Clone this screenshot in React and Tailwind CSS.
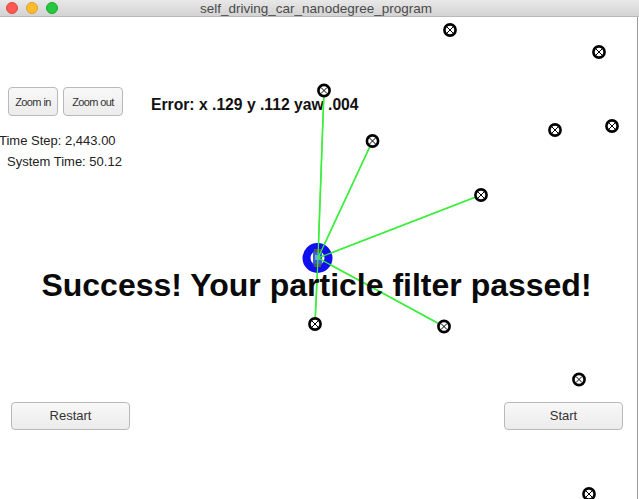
import React from "react";

const landmarks = [
  [450, 30], [599, 52], [324, 90.5], [555, 130], [612, 126], [372.5, 141],
  [481, 195], [315, 324], [444, 326.5], [579, 379.5], [589, 494],
];
const observed = [[324, 90.5], [372.5, 141], [481, 195], [444, 326.5], [315, 324]];
const car = [318, 258];

function Btn({ children, className }) {
  return (
    <div
      className={
        "flex items-center justify-center rounded-[4px] border border-[#b9b9b9] bg-gradient-to-b from-[#f8f8f8] to-[#ececec] text-[#333] " +
        className
      }
    >
      {children}
    </div>
  );
}

export default function App() {
  return (
    <div
      className="relative w-[639px] h-[499px] overflow-hidden bg-white"
      style={{ fontFamily: '"Liberation Sans", Arial, sans-serif' }}
    >
      {/* title bar */}
      <div className="relative flex h-[17px] items-center border-b border-[#b8b8b8] bg-gradient-to-b from-[#e8e8e8] to-[#d3d3d3]">
        <div className="relative z-10 flex gap-[8px] pl-[6px]">
          <div className="h-[12px] w-[12px] rounded-full bg-[#fc5753] border border-[#df4744]" />
          <div className="h-[12px] w-[12px] rounded-full bg-[#fdbc2e] border border-[#de9f34]" />
          <div className="h-[12px] w-[12px] rounded-full bg-[#27c83f] border border-[#1aab29]" />
        </div>
        <div className="absolute inset-0 flex items-center justify-center pr-[7px] pt-[1px] text-[13.5px] leading-none text-[#4a4a4a]">
          self_driving_car_nanodegree_program
        </div>
      </div>

      {/* canvas */}
      <div className="relative h-[482px] border-r border-[#9a9a9a] w-[638px]">
        <div className="flex items-center pl-[8px] pt-[70px]">
          <Btn className="h-[29px] w-[50px] text-[11px] tracking-[-0.6px]">Zoom in</Btn>
          <Btn className="ml-[5px] h-[29px] w-[60px] text-[11px] tracking-[-0.6px]">Zoom out</Btn>
          <div className="ml-[28px] mt-[6px] text-[15.7px] font-bold text-[#111]">
            Error: x .129 y .112 yaw .004
          </div>
        </div>
        <div className="ml-[-1px] mt-[16px] text-[13px] leading-[16px] text-[#222]">Time Step: 2,443.00</div>
        <div className="ml-[7px] mt-[5px] text-[13px] leading-[16px] text-[#222]">System Time: 50.12</div>

        {/* graphics */}
        <svg
          className="absolute left-0 top-[-17px] pointer-events-none"
          width="639"
          height="499"
          viewBox="0 0 639 499"
        >
          {observed.map(([x, y], i) => (
            <line key={i} x1={car[0]} y1={car[1]} x2={x} y2={y} stroke="#3cef3c" strokeWidth="1.6" />
          ))}
          <circle cx="317.5" cy="258" r="11" fill="none" stroke="#1010ee" strokeWidth="8" />
          <rect x="313" y="251" width="9" height="14" rx="1.5" fill="#3a5fd0" />
          <rect x="314" y="249" width="7" height="3" fill="#555" />
          <rect x="314" y="264" width="7" height="3" fill="#555" />
          <rect x="315" y="255" width="5" height="5" fill="#7aa0f0" />
          {observed.map(([x, y], i) => (
            <line key={"o" + i} x1={car[0]} y1={car[1]} x2={x} y2={y} stroke="#3cef3c" strokeWidth="1.2" />
          ))}
          {landmarks.map(([x, y], i) => (
            <g key={i}>
              <circle cx={x} cy={y} r="5.6" fill="white" stroke="#000" strokeWidth="2.6" />
              <line x1={x - 3} y1={y - 3} x2={x + 3} y2={y + 3} stroke="#000" strokeWidth="1" />
              <line x1={x - 3} y1={y + 3} x2={x + 3} y2={y - 3} stroke="#000" strokeWidth="1" />
            </g>
          ))}
        </svg>

        <div className="relative mt-[97px] text-center text-[32px] font-bold leading-[36px] text-[#0a0a0a] pr-[4px]">
          Success! Your particle filter passed!
        </div>

        <div className="mt-[99px] flex justify-between pl-[11px] pr-[14px]">
          <Btn className="h-[28px] w-[119px] text-[13px]">Restart</Btn>
          <Btn className="h-[28px] w-[119px] text-[13px]">Start</Btn>
        </div>
      </div>
    </div>
  );
}
